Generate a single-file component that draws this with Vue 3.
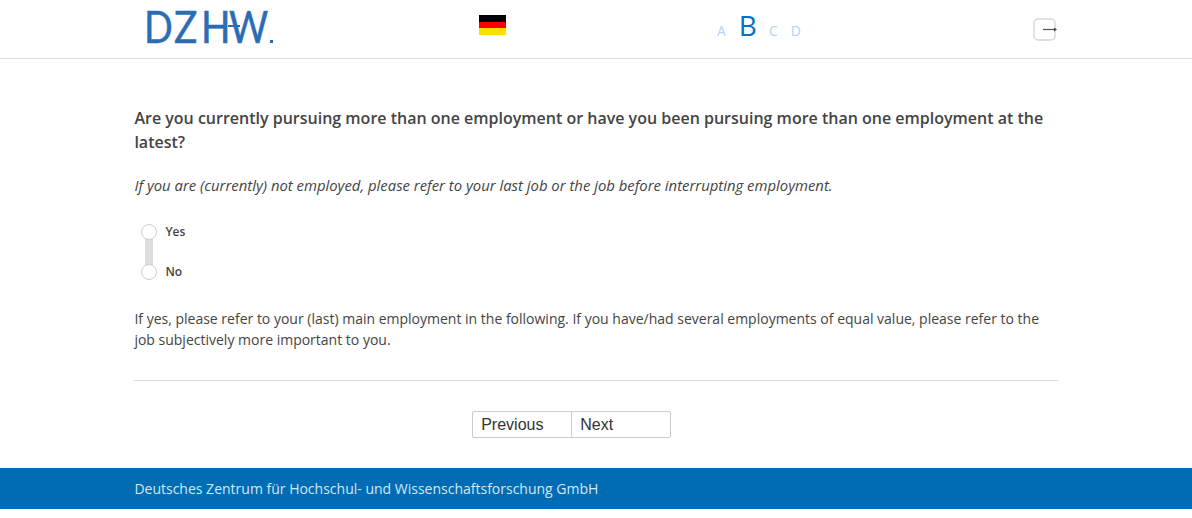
<script setup>
const letters = [
  { id: 'A', active: false },
  { id: 'B', active: true },
  { id: 'C', active: false },
  { id: 'D', active: false },
];
const options = ['Yes', 'No'];
</script>

<template>
  <div class="page">
    <header class="top">
      <div class="top-inner">
        <div class="logo">
          <span class="logo-text d">D</span>
          <span class="logo-text z">Z</span>
          <span class="logo-text h">H</span>
          <span class="logo-text w">W</span>
          <span class="logo-dot"></span>
          <span class="logo-bar"></span>
        </div>
        <div class="flag"><i class="black"></i><i class="red"></i><i class="gold"></i></div>
        <div class="versions">
          <span v-for="l in letters" :key="l.id" class="ver" :class="{ on: l.active }">{{ l.id }}</span>
        </div>
        <div class="exit">
          <svg width="26" height="24" viewBox="0 0 26 24">
            <rect x="1" y="2" width="21" height="21" rx="4" fill="#fff" stroke="#d6d6d6" stroke-width="1.4" />
            <path d="M10 12.5H22" stroke="#555" stroke-width="1.2" fill="none" />
            <path d="M21 10.5L24 12.5L21 14.5Z" fill="#444" />
          </svg>
        </div>
      </div>
    </header>

    <main class="content">
      <h1 class="question">Are you currently pursuing more than one employment or have you been pursuing more than one employment at the latest?</h1>
      <p class="hint">If you are (currently) not employed, please refer to your last job or the job before interrupting employment.</p>
      <div class="options">
        <label v-for="o in options" :key="o" class="option">
          <span class="radio"></span>
          <span class="option-label">{{ o }}</span>
        </label>
      </div>
      <p class="note">If yes, please refer to your (last) main employment in the following. If you have/had several employments of equal value, please refer to the job subjectively more important to you.</p>
      <hr class="rule" />
      <div class="nav">
        <button class="btn prev">Previous</button>
        <button class="btn next">Next</button>
      </div>
    </main>

    <footer class="foot">
      <div class="foot-inner">Deutsches Zentrum für Hochschul- und Wissenschaftsforschung GmbH</div>
    </footer>
  </div>
</template>

<style scoped>
.page {
  font-family: "Open Sans", "Liberation Sans", sans-serif;
  color: #444;
  background: #fff;
}
.top {
  height: 58px;
  border-bottom: 1px solid #ddd;
}
.top-inner {
  width: 924px;
  height: 58px;
  margin: 0 auto;
  position: relative;
}
.logo {
  position: absolute;
  left: 10px;
  top: 0;
  width: 130px;
  height: 58px;
  display: flex;
  color: #2b6cb5;
}
.logo-text {
  display: block;
  font-family: "Lato", sans-serif;
  font-size: 44px;
  line-height: 52px;
  -webkit-text-stroke: 0.5px #2b6cb5;
  transform-origin: left center;
}
.d { width: 30px; transform: scaleX(0.86); }
.z { width: 32px; transform: scaleX(0.88); }
.h { width: 29px; transform: scaleX(0.88); }
.w { transform: scaleX(0.86); margin-left: -1px; }
.logo-dot {
  position: absolute;
  left: 126px;
  top: 40px;
  width: 3px;
  height: 3px;
  background: #2b6cb5;
}
.logo-bar {
  position: absolute;
  left: 84px;
  top: 25px;
  width: 12px;
  height: 2px;
  background: #2b6cb5;
}
.flag {
  position: absolute;
  left: 345px;
  top: 15px;
  width: 27px;
  height: 20px;
  display: flex;
  flex-direction: column;
}
.flag i {
  flex: 1;
}
.black { background: #000; }
.red { background: #f00; }
.gold { background: #ffdf00; }
.versions {
  position: absolute;
  left: 583px;
  top: 10px;
  display: flex;
  align-items: baseline;
  gap: 13px;
  height: 30px;
  line-height: 30px;
}
.ver {
  font-size: 14px;
  color: #b3d4ee;
}
.ver.on {
  font-size: 28px;
  margin-right: -1px;
  color: #0770c4;
}
.exit {
  position: absolute;
  right: -1px;
  top: 17px;
  line-height: 0;
}
.content {
  width: 924px;
  margin: 0 auto;
  padding-top: 47px;
  padding-left: 0.4px;
  box-sizing: border-box;
}
.question {
  margin: 0;
  font-size: 16px;
  font-weight: 600;
  line-height: 24px;
  color: #444;
}
.hint {
  margin: 21px 0 0;
  font-size: 14.86px;
  font-style: italic;
  line-height: 20px;
}
.options {
  margin-top: 28px;
  padding-left: 7px;
  position: relative;
  display: flex;
  flex-direction: column;
  gap: 24px;
}
.options::before {
  content: "";
  position: absolute;
  left: 11px;
  top: 12px;
  width: 8px;
  height: 30px;
  background: #ddd;
}
.option {
  display: flex;
  align-items: center;
  gap: 8px;
  height: 16px;
  position: relative;
}
.radio {
  width: 14px;
  height: 14px;
  margin-top: 2px;
  border: 1px solid #ccc;
  border-radius: 50%;
  background: #fff;
}
.option-label {
  font-size: 12px;
  font-weight: 600;
}
.note {
  margin: 29px 0 0;
  font-size: 14px;
  line-height: 21px;
}
.rule {
  margin: 30px 0 0;
  border: 0;
  border-top: 1px solid #ddd;
}
.nav {
  margin-top: 30px;
  padding-right: 49px;
  display: flex;
  justify-content: center;
}
.btn {
  width: 100px;
  height: 27px;
  padding: 0 8px;
  background: #fff;
  border: 1px solid #ccc;
  font-family: "Liberation Sans", Arial, sans-serif;
  font-size: 16px;
  color: #333;
  text-align: left;
}
.prev {
  border-radius: 2px 0 0 2px;
}
.next {
  margin-left: -1px;
  border-radius: 0 2px 2px 0;
}
.foot {
  margin-top: 30px;
  height: 41px;
  background: #016cb4;
  color: #d6e6f3;
}
.foot-inner {
  width: 924px;
  margin: 0 auto;
  padding-left: 0.4px;
  box-sizing: border-box;
  font-size: 14px;
  line-height: 41px;
}
</style>
